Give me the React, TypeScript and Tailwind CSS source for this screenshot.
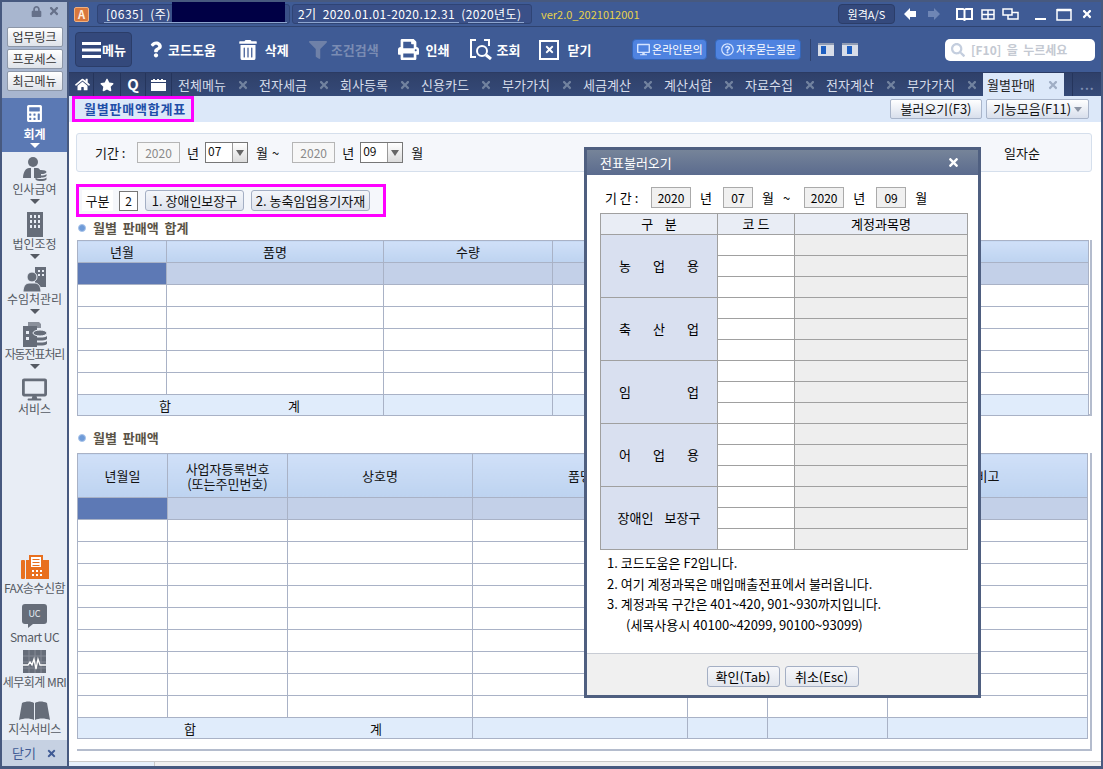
import {
  FaCalculator,
  FaDesktop,
  FaFilter,
  FaHome,
  FaLock,
  FaPrint,
  FaQuestion,
  FaRegQuestionCircle,
  FaSearch,
  FaStar,
  FaTimes,
  FaTrashAlt,
} from "react-icons/fa";

const tabs = ["전체메뉴", "전자세금", "회사등록", "신용카드", "부가가치", "세금계산", "계산서합", "자료수집", "전자계산", "부가가치"];

function PersonIcon() {
  return (
    <svg width="24" height="25" viewBox="0 0 24 25" fill="#666d79">
      <circle cx="10" cy="5" r="5" />
      <path d="M0 21c0-6 3-10 6-10h8c2 0 4 2 4 5v5z" />
      <path d="M8 11h3v10H8z" fill="#e8edf5" />
      <ellipse cx="18" cy="15" rx="5.5" ry="2" />
      <path d="M12.500 17c2 2 9 2 11 0v2c-2 2-9 2-11 0zM12.500 20.500c2 2 9 2 11 0v2c-2 2-9 2-11 0z" />
    </svg>
  );
}

function BuildingIcon() {
  return (
    <svg width="16" height="25" viewBox="0 0 16 25" fill="#666d79">
      <path fillRule="evenodd" d="M0 0h16v25H0zM3 3v3h2V3zm4 0v3h2V3zm4 0v3h2V3zM3 8v3h2V8zm4 0v3h2V8zm4 0v3h2V8zM3 13v3h2v-3zm4 0v3h2v-3zm4 0v3h2v-3z" />
    </svg>
  );
}

function ClientIcon() {
  return (
    <svg width="23" height="25" viewBox="0 0 23 25" fill="#666d79">
      <path fillRule="evenodd" d="M12 0h11v20H12zm3 3v2h2V3zm4 0v2h2V3zm-4 4v2h2V7zm4 0v2h2V7z" />
      <circle cx="9" cy="10" r="5" stroke="#e8edf5" />
      <path d="M0 25c0-6 3-9 6-9h6c3 0 6 3 6 9z" stroke="#e8edf5" />
    </svg>
  );
}

function AutoSlipIcon() {
  return (
    <svg width="24" height="25" viewBox="0 0 24 25" fill="#666d79">
      <path d="M5 0h11l2 2v4H5z" fill="#8a909b" />
      <path fillRule="evenodd" d="M0 4h14v21H0zM3 9v3h3V9zm0 6v3h3v-3z" />
      <ellipse cx="17" cy="11" rx="7" ry="3" stroke="#e8edf5" />
      <path d="M10 14c2 2 12 2 14 0v3c-2 2-12 2-14 0zM10 19c2 2 12 2 14 0v3c-2 2-12 2-14 0z" />
    </svg>
  );
}

function FaxIcon() {
  return (
    <svg width="28" height="24" viewBox="0 0 28 24">
      <rect x="0" y="5" width="4" height="19" rx="1" fill="#e8701f" />
      <path d="M5 5h3V0h14v5h6v19H5z" fill="#e8701f" />
      <path d="M10 2h10v10H10z" fill="#fff" />
      <path d="M11.500 4h7v1h-7zM11.500 7h7v1h-7zM11.500 10h7v1h-7z" fill="#e8701f" />
      <path d="M11 15h2v2h-2zM15 15h2v2h-2zM19 15h2v2h-2zM11 19h2v2h-2zM15 19h2v2h-2zM19 19h2v2h-2z" fill="#fff" />
    </svg>
  );
}

function MriIcon() {
  return (
    <svg width="23" height="23" viewBox="0 0 23 23">
      <rect width="23" height="23" fill="#666d79" />
      <path d="M0 6h23M0 12h23M0 18h23M6 0v23M12 0v23M18 0v23" stroke="#858b96" strokeWidth="1" />
      <path d="M0 15h5l2-3 2 3 2-6 2 10 2-10 2 6h6" stroke="#fff" strokeWidth="1.300" fill="none" />
    </svg>
  );
}

function BookIcon() {
  return (
    <svg width="31" height="19" viewBox="0 0 31 19" fill="#666d79">
      <path d="M3 2c4-2 9-2 12 0v17c-4-2-10-2-15 0zM16 2c3-2 8-2 12 0l3 17c-5-2-11-2-15 0z" />
    </svg>
  );
}

function SideItem({ icon, label, tight = false }: { icon: any; label: string; tight?: boolean }) {
  return (
    <div className="h-[55px] flex flex-col items-center">
      <div className="h-[29px] flex items-end justify-center">{icon}</div>
      <p className={`text-[12px] leading-[14px] text-[#555a63] whitespace-nowrap ${tight ? "tracking-[-1.100px]" : ""}`}>{label}</p>
      <div className="mt-[3px] w-0 h-0 border-x-[5px] border-x-transparent border-t-[5px] border-t-[#555a63]" />
    </div>
  );
}

function BottomItem({ icon, label, className }: { icon: any; label: string; className: string }) {
  return (
    <div className={`flex flex-col items-center ${className}`}>
      <div className="h-[24px] flex items-end">{icon}</div>
      <p className="text-[12px] leading-[16px] mt-[1px] text-[#555a63] tracking-[-0.500px] whitespace-nowrap">{label}</p>
    </div>
  );
}

function SideButton({ label }: { label: string }) {
  return (
    <div className="mx-auto w-[56px] h-[20px] rounded-[2px] border border-[#8d97a8] bg-linear-to-b from-white to-[#dfe3ea] text-[12px] leading-[18px] text-center text-[#333]">
      {label}
    </div>
  );
}

function Sidebar() {
  return (
    <div className="w-[65px] shrink-0 flex flex-col bg-[#e8edf5]">
      <div className="h-[96px] bg-[#a8b6cf] flex flex-col">
        <div className="h-[25px] flex items-center justify-end gap-[6px] pr-[7px] pb-[7px]">
          <FaLock size={11} color="#66718a" />
          <FaTimes size={12} color="#66718a" />
        </div>
        <div className="flex flex-col gap-[2px]">
          <SideButton label="업무링크" />
          <SideButton label="프로세스" />
          <SideButton label="최근메뉴" />
        </div>
      </div>
      <div className="h-[54px] bg-[#5b79b4] flex flex-col items-center pt-[7px]">
        <FaCalculator size={17} color="#fff" />
        <p className="mt-[3px] text-[12px] leading-[17px] font-bold text-white">회계</p>
        <div className="mt-[1px] w-0 h-0 border-x-[5px] border-x-transparent border-t-[5px] border-t-white" />
      </div>
      <div className="pt-[1px]">
        <SideItem icon={<PersonIcon />} label="인사급여" />
        <SideItem icon={<BuildingIcon />} label="법인조정" />
        <SideItem icon={<ClientIcon />} label="수임처관리" />
        <SideItem icon={<AutoSlipIcon />} label="자동전표처리" tight />
        <div className="flex flex-col items-center">
          <div className="h-[29px] flex items-end">
            <FaDesktop size={25} color="#666d79" />
          </div>
          <p className="text-[12px] leading-[14px] text-[#555a63]">서비스</p>
        </div>
      </div>
      <div className="flex-1" />
      <BottomItem icon={<FaxIcon />} label="FAX송수신함" className="mb-[8px]" />
      <BottomItem
        icon={
          <div className="relative w-[25px] h-[24px]">
            <div className="h-[20px] rounded-[3px] bg-[#666d79] text-[9px] leading-[20px] text-center text-[#e8edf5]">UC</div>
            <div className="absolute left-[6px] top-[20px] w-0 h-0 border-r-[5px] border-r-transparent border-t-[4px] border-t-[#666d79]" />
          </div>
        }
        label="Smart UC"
        className="mb-[4px]"
      />
      <BottomItem icon={<MriIcon />} label="세무회계 MRI" className="mb-[6px]" />
      <BottomItem icon={<BookIcon />} label="지식서비스" className="mb-[3px]" />
      <div className="h-[26px] shrink-0 bg-[#c6d1e2] flex items-center justify-center gap-[10px] text-[13px] text-[#3f5a94]">
        닫기
        <FaTimes size={11} color="#3f5a94" />
      </div>
    </div>
  );
}

function TopRow() {
  return (
    <div className="h-[25px] flex items-center border-b border-[#2f4370] text-[12px] text-white">
      <div className="ml-[5px] w-[15px] h-[15px] rounded-[2px] bg-[#d9783c] border border-[#f0b080] text-[11px] font-bold leading-[13px] text-center text-[#fff0e0]">A</div>
      <div className="relative ml-[8px] w-[193px] h-[20px] rounded-[3px] bg-[#3a5088] border border-[#2f4475] pl-[8px] leading-[18px] tracking-[0.500px] whitespace-pre">
        [0635]  (주)
        <div className="absolute left-[6px] right-[2px] bottom-[0px] h-[1px] bg-[#8ea6d0]" />
        <div className="absolute left-[74px] top-[-3px] w-[113px] h-[20px] bg-[#000045]" />
      </div>
      <div className="relative ml-[2px] w-[240px] h-[20px] rounded-[3px] bg-[#3a5088] border border-[#2f4475] pl-[5px] leading-[18px] tracking-[0.400px] whitespace-pre">
        2기  2020.01.01-2020.12.31  (2020년도)
        <div className="absolute left-[5px] w-[161px] bottom-[0px] h-[1px] bg-[#8ea6d0]" />
        <div className="absolute left-[175px] w-[56px] bottom-[0px] h-[1px] bg-[#8ea6d0]" />
      </div>
      <p className="ml-[9px] text-[11px] text-[#e8d24a]">ver2.0_2021012001</p>
      <div className="ml-auto w-[57px] h-[20px] rounded-[4px] bg-[#34497c] border border-[#2b3d69] text-[11px] leading-[18px] text-center">원격A/S</div>
      <svg className="ml-[9px]" width="12" height="12" viewBox="0 0 12 12" fill="#fff">
        <path d="M0 6l6-6v3h6v6H6v3z" />
      </svg>
      <svg className="ml-[12px]" width="12" height="12" viewBox="0 0 12 12" fill="#6f86b5">
        <path d="M12 6L6 0v3H0v6h6v3z" />
      </svg>
      <svg className="ml-[16px]" width="17" height="13" viewBox="0 0 17 13" fill="none" stroke="#fff" strokeWidth="2">
        <path d="M1 1h6l1.500 1L10 1h6v10h-6l-1.500 1L7 11H1zM8.500 2v10" />
      </svg>
      <svg className="ml-[8px]" width="14" height="11" viewBox="0 0 14 11" fill="none" stroke="#fff" strokeWidth="1.500">
        <path d="M1 1h12v9H1zM1 5.500h12M7 1v9" />
      </svg>
      <svg className="ml-[7px]" width="17" height="12" viewBox="0 0 17 12" fill="none" stroke="#fff" strokeWidth="1.500">
        <path d="M1 1h9v6H1zM10 4.500h6V11H6V7" />
      </svg>
      <div className="ml-[16px] w-[11px] h-[2px] mt-[9px] bg-white" />
      <svg className="ml-[10px]" width="16" height="13" viewBox="0 0 16 13" fill="none" stroke="#fff">
        <path d="M1 2.500h14M1 1.500h14M1 1v11h14V1" strokeWidth="1.500" />
      </svg>
      <FaTimes className="ml-[9px] mr-[8px]" size={12} color="#fff" />
    </div>
  );
}

function ToolText({ children, dim = false, className = "" }: { children: any; dim?: boolean; className?: string }) {
  return <p className={`text-[13px] font-bold whitespace-nowrap ${dim ? "text-[#7a8cb3]" : "text-white"} ${className}`}>{children}</p>;
}

function Toolbar() {
  return (
    <div className="h-[45px] flex items-center">
      <div className="ml-[6px] w-[57px] h-[35px] rounded-[4px] bg-[#34497c] border border-[#2b3d69] flex items-center pl-[6px] gap-[1px]">
        <svg width="19" height="16" viewBox="0 0 19 16" fill="#fff">
          <path d="M0 0h19v3H0zM0 6.500h19v3H0zM0 13h19v3H0z" />
        </svg>
        <ToolText>메뉴</ToolText>
      </div>
      <FaQuestion className="ml-[18px] w-[12px]" size={21} color="#fff" />
      <ToolText className="ml-[6px]">코드도움</ToolText>
      <FaTrashAlt className="ml-[22px]" size={20} color="#fff" />
      <ToolText className="ml-[7px]">삭제</ToolText>
      <FaFilter className="ml-[20px]" size={18} color="#6f81a8" />
      <ToolText dim className="ml-[4px]">조건검색</ToolText>
      <FaPrint className="ml-[19px]" size={21} color="#fff" />
      <ToolText className="ml-[7px]">인쇄</ToolText>
      <svg className="ml-[20px]" width="22" height="21" viewBox="0 0 22 21" fill="none" stroke="#fff" strokeWidth="2">
        <path d="M6 1H1v17h5M14 1h5v6" />
        <circle cx="12" cy="12" r="5" />
        <path d="M16 16l5 4" strokeWidth="3" />
      </svg>
      <ToolText className="ml-[5px]">조회</ToolText>
      <div className="ml-[19px] w-[20px] h-[20px] border-2 border-white flex items-center justify-center">
        <FaTimes size={11} color="#fff" />
      </div>
      <ToolText className="ml-[8px]">닫기</ToolText>
      <div className="ml-[41px] w-[75px] h-[21px] rounded-[4px] bg-[#4f83e0] border border-[#3566b8] flex items-center justify-center gap-[2px] text-[11px] text-white whitespace-nowrap">
        <FaDesktop size={13} color="#d5e4ff" />
        온라인문의
      </div>
      <div className="ml-[8px] w-[86px] h-[21px] rounded-[4px] bg-[#4f83e0] border border-[#3566b8] flex items-center justify-center gap-[2px] text-[11px] text-white tracking-[-0.200px] whitespace-nowrap">
        <FaRegQuestionCircle size={13} color="#d5e4ff" />
        자주묻는질문
      </div>
      <div className="ml-[9px] w-[1px] h-[22px] bg-[#2f4370]" />
      <div className="ml-[7px] w-[16px] h-[13px] bg-[#d8dde8] border-t-2 border-[#8f9bb3] flex pl-[3px] pt-[1px]">
        <div className="w-[5px] h-[8px] bg-[#1f5fc0]" />
      </div>
      <div className="ml-[8px] w-[16px] h-[13px] bg-[#d8dde8] border-t-2 border-[#8f9bb3] flex pl-[5px] pt-[1px]">
        <div className="w-[5px] h-[8px] bg-[#1f5fc0]" />
      </div>
      <div className="ml-auto mr-[6px] w-[150px] h-[22px] rounded-[5px] bg-white flex items-center pl-[6px] gap-[6px] text-[12px] font-bold text-[#c4c9d2] whitespace-pre">
        <FaSearch size={14} color="#c4cede" />
        [F10]  을  누르세요
      </div>
    </div>
  );
}

function TabBar() {
  return (
    <div className="h-[24px] flex items-center bg-linear-to-b from-[#2f4069] to-[#354a78] border-t border-[#2b3b63] text-[13px]">
      <div className="ml-[3px] w-[22px] h-full flex items-center justify-center border-r border-[#25355c]">
        <FaHome size={15} color="#fff" />
      </div>
      <div className="w-[27px] h-full flex items-center justify-center border-r border-[#25355c]">
        <FaStar size={14} color="#fff" />
      </div>
      <div className="w-[25px] h-full flex items-center justify-center border-r border-[#25355c] text-[15px] font-bold text-white">Q</div>
      <div className="w-[26px] h-full flex items-center justify-center border-r border-[#25355c]">
        <svg width="15" height="12" viewBox="0 0 15 12" fill="#fff">
          <path d="M0 3V1h2V0h2v1h2V0h2v1h2V0h2v1h3v2zM0 4h15v8H0z" />
        </svg>
      </div>
      {tabs.map((tab, i) => (
        <div key={i} className="w-[81px] shrink-0 flex items-center pl-[6px]">
          <p className="w-[48px] text-[#d5dcea] whitespace-nowrap">{tab}</p>
          <FaTimes className="ml-[11px]" size={12} color="#71829f" />
        </div>
      ))}
      <div className="ml-[1px] w-[81px] h-full bg-[#dce8f9] flex items-center pl-[4px]">
        <p className="w-[48px] text-[#222] whitespace-nowrap">월별판매</p>
        <FaTimes className="ml-[12px]" size={12} color="#a0aec5" />
      </div>
      <div className="ml-[8px] w-[1px] h-full bg-[#25355c]" />
      <p className="ml-[7px] text-[12px] font-bold tracking-[1px] text-[#7f90b3]">...</p>
    </div>
  );
}

function TitleBar() {
  return (
    <div className="h-[26px] shrink-0 bg-[#dce8f9] flex items-start">
      <div className="ml-[3px] w-[122px] h-[26px] border-[3px] border-[#ff00ff] pl-[9px] text-[13px] leading-[20px] font-bold tracking-[0.800px] text-[#1f4fa8] whitespace-nowrap">
        월별판매액합계표
      </div>
      <div className="ml-auto mt-[3px] w-[92px] h-[20px] rounded-[2px] border border-[#a9b5ca] bg-linear-to-b from-white to-[#d8dfec] text-[13px] leading-[18px] text-center whitespace-nowrap">
        불러오기(F3)
      </div>
      <div className="ml-[4px] mr-[12px] mt-[3px] w-[103px] h-[20px] rounded-[2px] border border-[#a9b5ca] bg-linear-to-b from-white to-[#d8dfec] text-[13px] leading-[18px] flex items-center justify-center gap-[3px] whitespace-nowrap">
        기능모음(F11)
        <div className="w-0 h-0 border-x-[4px] border-x-transparent border-t-[5px] border-t-[#8c95a5]" />
      </div>
    </div>
  );
}

function YearBox() {
  return <div className="w-[43px] h-[21px] border border-[#b5b5b5] bg-[#f7f7f7] text-[12px] leading-[19px] text-center text-[#8a8a8a]">2020</div>;
}

function MonthSelect({ value }: { value: string }) {
  return (
    <div className="w-[43px] h-[21px] border border-[#777] bg-white flex text-[12px] leading-[16px]">
      <p className="w-[26px] pl-[2px]">{value}</p>
      <div className="flex-1 border-l border-[#999] bg-linear-to-b from-white to-[#dcdcdc] flex items-center justify-center">
        <div className="w-0 h-0 border-x-[4px] border-x-transparent border-t-[6px] border-t-[#666]" />
      </div>
    </div>
  );
}

function PeriodPanel() {
  return (
    <div className="ml-[7px] mt-[11px] w-[1016px] h-[39px] shrink-0 rounded-[3px] border border-[#d5dfec] bg-[#f5f7fb] flex items-center text-[13px]">
      <p className="ml-[18px] w-[32px] whitespace-nowrap">기간 :</p>
      <div className="ml-[10px]"><YearBox /></div>
      <p className="ml-[7px]">년</p>
      <div className="ml-[6px]"><MonthSelect value="07" /></div>
      <p className="ml-[8px]">월</p>
      <p className="ml-[4px]">~</p>
      <div className="ml-[13px]"><YearBox /></div>
      <p className="ml-[7px]">년</p>
      <div className="ml-[6px]"><MonthSelect value="09" /></div>
      <p className="ml-[8px]">월</p>
      <p className="ml-auto mr-[51px]">일자순</p>
    </div>
  );
}

function GubunRow() {
  return (
    <div className="ml-[7px] mt-[12px] w-[310px] h-[33px] shrink-0 border-[3px] border-[#ff00ff] bg-[#f5f7fb] flex items-center text-[13px]">
      <div className="ml-[3px] w-[31px] h-[21px] bg-white text-center leading-[21px]">구분</div>
      <div className="ml-[6px] w-[19px] h-[20px] border border-[#777] bg-white text-center text-[12px] leading-[18px]">2</div>
      <div className="ml-[7px] w-[99px] h-[21px] rounded-[3px] border border-[#a4afc4] bg-linear-to-b from-[#f4f6fa] to-[#dfe4ee] text-center leading-[19px] whitespace-nowrap">1. 장애인보장구</div>
      <div className="ml-[7px] w-[119px] h-[21px] rounded-[3px] border border-[#a4afc4] bg-linear-to-b from-[#f4f6fa] to-[#dfe4ee] text-center leading-[19px] whitespace-nowrap">2. 농축임업용기자재</div>
    </div>
  );
}

function SectionTitle({ text, className }: { text: string; className: string }) {
  return (
    <div className={`ml-[9px] h-[16px] shrink-0 flex items-center ${className}`}>
      <div className="w-[8px] h-[8px] rounded-full bg-[#6f9bd8] border border-[#a9c4ea]" />
      <p className="ml-[7px] text-[13px] font-bold text-[#5a5346] whitespace-pre">{text}</p>
    </div>
  );
}

const cellLine = "border border-[#a9b2c6]";
const headCell = `${cellLine} bg-linear-to-b from-[#d0e0f8] to-[#bdd3f0] font-normal text-[13px] leading-[15px] p-0 whitespace-nowrap`;

function SummaryTable() {
  const widths = [89, 217, 169, 536];
  return (
    <div className="ml-[8px] mt-[4px] w-[1015px] h-[176px] shrink-0 border-r-2 border-b-2 border-[#b4bccd]">
      <table className="table-fixed border-collapse w-[1011px]">
        <colgroup>
          {widths.map((w, i) => (
            <col key={i} style={{ width: w }} />
          ))}
        </colgroup>
        <thead>
          <tr className="h-[22px]">
            <th className={headCell}>년월</th>
            <th className={headCell}>품명</th>
            <th className={headCell}>수량</th>
            <th className={headCell}></th>
          </tr>
        </thead>
        <tbody>
          <tr className="h-[22px]">
            <td className={`${cellLine} bg-[#5d79b5]`}></td>
            <td className={`${cellLine} bg-[#c3d0e8]`}></td>
            <td className={`${cellLine} bg-[#c3d0e8]`}></td>
            <td className={`${cellLine} bg-[#c3d0e8]`}></td>
          </tr>
          {[0, 1, 2, 3, 4].map((r) => (
            <tr key={r} className="h-[22px]">
              {widths.map((_, i) => (
                <td key={i} className={cellLine}></td>
              ))}
            </tr>
          ))}
          <tr className="h-[21px]">
            <td colSpan={2} className={`${cellLine} bg-[#e0ecfb] p-0`}>
              <div className="flex justify-between pl-[81px] pr-[83px] text-[13px] leading-[19px]">
                <span>합</span>
                <span>계</span>
              </div>
            </td>
            <td className={`${cellLine} bg-[#e0ecfb]`}></td>
            <td className={`${cellLine} bg-[#e0ecfb]`}></td>
          </tr>
        </tbody>
      </table>
    </div>
  );
}

function DetailTable() {
  const widths = [90, 120, 185, 215, 80, 120, 200];
  return (
    <div className="ml-[8px] mt-[7px] w-[1015px] h-[298px] shrink-0 border-r-2 border-b-2 border-[#b4bccd]">
      <table className="table-fixed border-collapse w-[1010px]">
        <colgroup>
          {widths.map((w, i) => (
            <col key={i} style={{ width: w }} />
          ))}
        </colgroup>
        <thead>
          <tr className="h-[44px]">
            <th className={headCell}>년월일</th>
            <th className={headCell}>
              사업자등록번호
              <br />
              (또는주민번호)
            </th>
            <th className={headCell}>상호명</th>
            <th className={headCell}>품명</th>
            <th className={headCell}></th>
            <th className={headCell}></th>
            <th className={headCell}>비고</th>
          </tr>
        </thead>
        <tbody>
          <tr className="h-[22px]">
            {widths.map((_, i) => (
              <td key={i} className={`${cellLine} ${i === 0 ? "bg-[#5d79b5]" : "bg-[#c3d0e8]"}`}></td>
            ))}
          </tr>
          {[0, 1, 2, 3, 4, 5, 6, 7, 8].map((r) => (
            <tr key={r} className="h-[22px]">
              {widths.map((_, i) => (
                <td key={i} className={cellLine}></td>
              ))}
            </tr>
          ))}
          <tr className="h-[21px]">
            <td colSpan={3} className={`${cellLine} bg-[#e0ecfb] p-0`}>
              <div className="flex justify-between pl-[106px] pr-[90px] text-[13px] leading-[19px]">
                <span>합</span>
                <span>계</span>
              </div>
            </td>
            {[0, 1, 2, 3].map((i) => (
              <td key={i} className={`${cellLine} bg-[#e0ecfb]`}></td>
            ))}
          </tr>
        </tbody>
      </table>
    </div>
  );
}

function ModalBox({ value, w }: { value: string; w: string }) {
  return <div className={`${w} h-[21px] border border-[#aaa] bg-[#f0f0f0] text-[12px] text-center leading-[20px]`}>{value}</div>;
}

const groups = [
  { name: ["농", "업", "용"], spread: true },
  { name: ["축", "산", "업"], spread: true },
  { name: ["임", "업"], spread: true },
  { name: ["어", "업", "용"], spread: true },
  { name: ["장애인", "보장구"], spread: false },
];

function SlipModal() {
  const line = "border border-[#a0a0a0]";
  return (
    <div className="absolute left-[584px] top-[147px] w-[397px] h-[551px] border-[3px] border-[#4f5f80] bg-white flex flex-col text-[13px] text-black">
      <div className="h-[25px] shrink-0 bg-linear-to-b from-[#768499] to-[#5b6b8e] flex items-center justify-between pl-[13px] pr-[18px] text-white">
        전표불러오기
        <FaTimes size={13} color="#fff" />
      </div>
      <div className="mt-[12px] ml-[18px] h-[21px] flex items-center whitespace-nowrap">
        <p className="w-[36px]">기 간 :</p>
        <div className="ml-[10px]"><ModalBox value="2020" w="w-[40px]" /></div>
        <p className="ml-[9px]">년</p>
        <div className="ml-[11px]"><ModalBox value="07" w="w-[30px]" /></div>
        <p className="ml-[9px]">월</p>
        <p className="ml-[9px]">~</p>
        <div className="ml-[14px]"><ModalBox value="2020" w="w-[40px]" /></div>
        <p className="ml-[9px]">년</p>
        <div className="ml-[11px]"><ModalBox value="09" w="w-[30px]" /></div>
        <p className="ml-[9px]">월</p>
      </div>
      <table className="ml-[13px] mt-[5px] w-[367px] table-fixed border-collapse">
        <colgroup>
          <col className="w-[117px]" />
          <col className="w-[77px]" />
          <col className="w-[173px]" />
        </colgroup>
        <thead>
          <tr className="h-[21px]">
            <th className={`${line} bg-[#e9edf5] font-normal p-0 whitespace-pre`}>구    분</th>
            <th className={`${line} bg-[#e9edf5] font-normal p-0 whitespace-pre`}>코 드</th>
            <th className={`${line} bg-[#e9edf5] font-normal p-0`}>계정과목명</th>
          </tr>
        </thead>
        <tbody>
          {groups.map((g, gi) =>
            [0, 1, 2].map((r) => (
              <tr key={`${gi}-${r}`} className="h-[21px]">
                {r === 0 && (
                  <td rowSpan={3} className={`${line} bg-[#d9e0f0] p-0`}>
                    <div className={`flex ${g.spread ? "justify-between px-[18px]" : "justify-center gap-[11px]"}`}>
                      {g.name.map((n, ni) => (
                        <span key={ni}>{n}</span>
                      ))}
                    </div>
                  </td>
                )}
                <td className={`${line} leading-[16px]`}></td>
                <td className={`${line} bg-[#eeeeee] leading-[16px]`}></td>
              </tr>
            ))
          )}
        </tbody>
      </table>
      <div className="mt-[3px] ml-[20px] leading-[20.700px] whitespace-pre">
        <p>1. 코드도움은 F2입니다.</p>
        <p>2. 여기 계정과목은 매입매출전표에서 불러옵니다.</p>
        <p>3. 계정과목 구간은 401~420, 901~930까지입니다.</p>
        <p className="pl-[19px]">(세목사용시 40100~42099, 90100~93099)</p>
      </div>
      <div className="mt-auto h-[42px] shrink-0 border-t border-[#c8ccd4] bg-[#f0f0f0] flex items-start justify-center gap-[5px] pt-[12px]">
        <div className="w-[73px] h-[21px] rounded-[3px] border border-[#a4afc4] bg-linear-to-b from-[#f6f7fa] to-[#e2e6ee] text-center leading-[19px]">확인(Tab)</div>
        <div className="w-[74px] h-[21px] rounded-[3px] border border-[#a4afc4] bg-linear-to-b from-[#f6f7fa] to-[#e2e6ee] text-center leading-[19px]">취소(Esc)</div>
      </div>
    </div>
  );
}

function App() {
  return (
    <div className="relative w-[1103px] h-[769px] overflow-hidden bg-[#47597f] pt-[2px] pl-[2px] pr-[2px] pb-[3px] flex gap-[2px] font-['Noto_Sans_CJK_KR','Liberation_Sans',sans-serif] text-[#111]">
      <Sidebar />
      <div className="flex-1 min-w-0 flex flex-col bg-white">
        <div className="shrink-0 bg-[#3f5b95]">
          <TopRow />
          <Toolbar />
          <TabBar />
        </div>
        <TitleBar />
        <PeriodPanel />
        <GubunRow />
        <SectionTitle text="월별  판매액  합계" className="mt-[3px]" />
        <SummaryTable />
        <SectionTitle text="월별  판매액" className="mt-[14px]" />
        <DetailTable />
        <div className="mt-auto h-[5px] shrink-0 border-t border-[#c8c8c8] bg-[#f0f0f0] flex">
          <div className="w-[86px] bg-[#e6f0fb] border-r border-[#c8c8c8]" />
        </div>
      </div>
      <SlipModal />
    </div>
  );
}

export default App;
